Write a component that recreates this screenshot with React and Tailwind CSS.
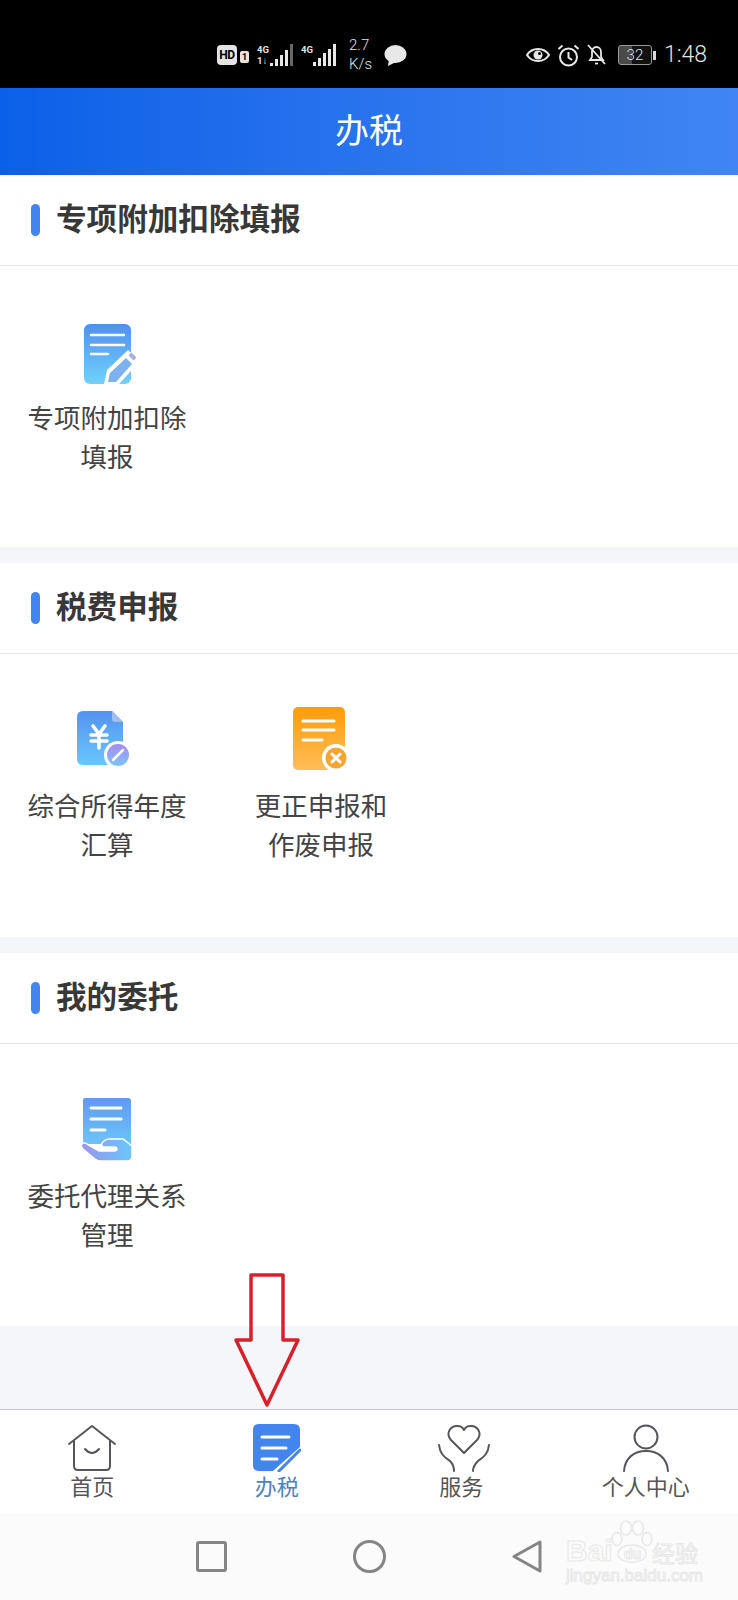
import React from 'react';

function SignalBars({ heights, dimLast }) {
    return (
        <div className="flex items-end gap-[2px] h-[22px]">
            {heights.map((h, i) => (
                <div key={i} className={`w-[3px] ${dimLast && i === heights.length - 1 ? 'bg-[#666]' : 'bg-[#e8e8e8]'}`} style={{ height: h }}></div>
            ))}
        </div>
    );
}

function StatusBar() {
    return (
        <div className="h-[88px] bg-black flex items-center justify-between pt-[22px] pl-[217px] pr-[31px] text-[#e2e2e2] font-['Roboto',sans-serif]">
            <div className="flex items-center">
                <div className="w-[20px] h-[20px] rounded-[4px] bg-[#e4e4e4] text-black text-[12px] font-bold leading-[20px] text-center tracking-[-0.5px]">HD</div>
                <div className="ml-[3px] mt-[4px] w-[9px] h-[12px] rounded-[2px] bg-[#e4e4e4] text-black text-[9px] font-bold leading-[12px] text-center">1</div>
                <div className="ml-[8px] w-[13px] text-[9.5px] font-bold leading-[11px]">
                    <div>4G</div>
                    <div>1↓</div>
                </div>
                <div className="ml-[0px]"><SignalBars heights={[3, 7, 11, 16, 22]} dimLast /></div>
                <div className="ml-[8px] w-[12px] h-[22px] text-[9.5px] font-bold leading-[11px]">4G</div>
                <div className="ml-[0px]"><SignalBars heights={[4, 8, 13, 17, 22]} /></div>
                <div className="ml-[13px] w-[24px] text-[15px] leading-[19px] font-light">
                    <div>2.7</div>
                    <div>K/s</div>
                </div>
                <svg className="ml-[11px]" width="23" height="21" viewBox="0 0 23 21">
                    <ellipse cx="11.5" cy="9" rx="11" ry="9" fill="#e8e8e8" />
                    <path d="M5 14 L4 21 L12 17 Z" fill="#e8e8e8" />
                </svg>
            </div>
            <div className="flex items-center">
                <svg width="24" height="18" viewBox="0 0 24 18" fill="none" stroke="#e8e8e8" strokeWidth="2">
                    <path d="M1 9 C6 1 18 1 23 9 C18 17 6 17 1 9 Z" />
                    <circle cx="12" cy="9" r="4.5" fill="#e8e8e8" stroke="none" />
                    <circle cx="13.5" cy="7.5" r="1.5" fill="#000" stroke="none" />
                </svg>
                <svg className="ml-[7px]" width="23" height="23" viewBox="0 0 23 23" fill="none" stroke="#e8e8e8" strokeWidth="2">
                    <circle cx="11.5" cy="13" r="8.5" />
                    <path d="M11.5 8 V13.5 L15 16" />
                    <path d="M1.5 5 L5.5 1.5 M21.5 5 L17.5 1.5" />
                </svg>
                <svg className="ml-[7px]" width="19" height="22" viewBox="0 0 19 22" fill="none" stroke="#e8e8e8" strokeWidth="1.8">
                    <path d="M3 16 H16 L14 13 V8 C14 5 12 3 9.5 3 C7 3 5 5 5 8 V13 Z" />
                    <path d="M8 19.5 H11" />
                    <path d="M1 1 L18 20" />
                </svg>
                <div className="ml-[12px] w-[34px] h-[20px] rounded-[3px] border border-[#9a9a9a] bg-[linear-gradient(90deg,#4a4a4a_40%,#111_40%)] text-[15px] leading-[18px] text-center font-light">32</div>
                <div className="ml-[1px] w-[3px] h-[9px] bg-[#d8d8d8]"></div>
                <div className="ml-[8px] text-[23px] leading-[30px] font-light">1:48</div>
            </div>
        </div>
    );
}

function DocPencil() {
    return (
        <svg width="47" height="60" viewBox="0 0 47 60" className="overflow-visible">
            <defs>
                <linearGradient id="docBlue" x1="0" y1="0" x2="0" y2="1">
                    <stop offset="0" stopColor="#5190ee" />
                    <stop offset="1" stopColor="#6fd2fb" />
                </linearGradient>
            </defs>
            <rect x="0" y="0" width="47" height="60" rx="6" fill="url(#docBlue)" />
            <path d="M7 11 H40 M7 21 H40 M7 30 H24" stroke="#fff" strokeWidth="2.5" strokeLinecap="round" />
            <path d="M20 60 L23 46 L44 26 L56 37 L35 60 Z" fill="#fff" />
            <path d="M24 58 L26 49 L42 34 L48 40 L32 58 Z" fill="#7fb1ee" />
            <path d="M46 30 L51 35" stroke="#a9addf" strokeWidth="4" />
        </svg>
    );
}

function DocYuan() {
    return (
        <svg className="mb-[3px]" width="60" height="58" viewBox="0 0 60 58">
            <defs>
                <linearGradient id="yuanBlue" x1="0" y1="0" x2="0" y2="1">
                    <stop offset="0" stopColor="#5493f0" />
                    <stop offset="1" stopColor="#67c8fa" />
                </linearGradient>
                <linearGradient id="yuanPurple" x1="0" y1="0" x2="0" y2="1">
                    <stop offset="0" stopColor="#a78bf0" />
                    <stop offset="1" stopColor="#7cc4f8" />
                </linearGradient>
            </defs>
            <path d="M6 0 H35 L46 11 V48 Q46 54 40 54 H6 Q0 54 0 48 V6 Q0 0 6 0 Z" fill="url(#yuanBlue)" />
            <path d="M35 0 L46 11 H38 Q35 11 35 8 Z" fill="#9dbdf3" />
            <path d="M16 15 L22 23 L28 15 M14 24 H30 M14 30 H30 M22 23 V37" fill="none" stroke="#fff" strokeWidth="3.6" strokeLinecap="round" />
            <circle cx="41" cy="44" r="14" fill="#fff" />
            <circle cx="41" cy="44" r="11" fill="url(#yuanPurple)" />
            <path d="M36 49 L46 39" stroke="#fff" strokeWidth="2.5" strokeLinecap="round" />
        </svg>
    );
}

function DocCancel() {
    return (
        <svg width="57" height="65" viewBox="0 0 57 65">
            <defs>
                <linearGradient id="docOrange" x1="0" y1="0" x2="0" y2="1">
                    <stop offset="0" stopColor="#ff9c0a" />
                    <stop offset="1" stopColor="#ffbc58" />
                </linearGradient>
            </defs>
            <rect x="0" y="0" width="52" height="63" rx="5" fill="url(#docOrange)" />
            <path d="M10 14 H41 M10 23 H41 M10 33 H29" stroke="#fff" strokeWidth="3" strokeLinecap="round" />
            <circle cx="43" cy="51" r="14" fill="#fff" />
            <circle cx="43" cy="51" r="10.5" fill="#f5a632" />
            <path d="M39 47 L47 55 M47 47 L39 55" stroke="#fff" strokeWidth="3" strokeLinecap="round" />
        </svg>
    );
}

function DocHand() {
    return (
        <svg width="52" height="64" viewBox="0 0 52 64">
            <defs>
                <linearGradient id="handDoc" x1="0" y1="0" x2="0" y2="1">
                    <stop offset="0" stopColor="#5f9af0" />
                    <stop offset="1" stopColor="#6cc4f8" />
                </linearGradient>
                <linearGradient id="handFill" x1="0" y1="0" x2="1" y2="0">
                    <stop offset="0" stopColor="#9a95ee" />
                    <stop offset="1" stopColor="#68c6fb" />
                </linearGradient>
            </defs>
            <path d="M4 0 H47 Q50 0 50 3 V46 H4 Q2 46 2 44 V2 Q2 0 4 0 Z" fill="url(#handDoc)" />
            <path d="M10 10 H40 M10 21 H40 M10 32 H24" stroke="#fff" strokeWidth="3" strokeLinecap="round" />
            <path d="M1 46 Q3 44 6 46 L18 53 H33 Q36 53 36 51 Q36 49 33 49 H22 Q19 46 23 43 Q25 41 29 41 H42 L51 48 V58 Q51 63 46 63 H20 Q17 63 14 61 L2 51 Q-1 48 1 46 Z" fill="url(#handFill)" stroke="#fff" strokeWidth="1.5" />
        </svg>
    );
}

function Section({ title, items, contentClass }) {
    return (
        <section className="bg-white">
            <div className="h-[91px] flex items-center border-b border-[#e4e4e6] pl-[31px]">
                <div className="w-[9px] h-[32px] rounded-full bg-[#4285f0]"></div>
                <h2 className="ml-[16px] -mt-[6px] text-[30.6px] leading-[40px] font-bold text-[#383838]">{title}</h2>
            </div>
            <div className={`grid grid-cols-[214px_214px_214px] pt-[50px] ${contentClass}`}>
                {items.map((item) => (
                    <div key={item.key} className="flex flex-col items-center">
                        <div className="h-[68px] flex items-end">{item.icon}</div>
                        <p className={`mt-[13px] text-[26.5px] leading-[39px] text-[#444] text-center ${item.widthClass}`}>{item.label}</p>
                    </div>
                ))}
            </div>
        </section>
    );
}

function HomeIcon() {
    return (
        <svg width="48" height="48" viewBox="0 0 48 48" fill="none" stroke="#55565c" strokeWidth="2" strokeLinecap="round" strokeLinejoin="round">
            <path d="M1 20 L24 2 L47 20" />
            <path d="M6 17 V42 Q6 46 10 46 H38 Q42 46 42 42 V17" />
            <path d="M17 25 Q24 33 31 25" />
        </svg>
    );
}

function TaxIcon() {
    return (
        <svg width="48" height="48" viewBox="0 0 48 48">
            <path d="M6 0 H41 Q47 0 47 6 V23 L20 47 H6 Q0 47 0 41 V6 Q0 0 6 0 Z" fill="#4285ef" />
            <path d="M9 13 H36 M9 24 H33 M9 35 H24" stroke="#fff" strokeWidth="3" strokeLinecap="round" />
            <path d="M26 47 L47 26" stroke="#4285ef" strokeWidth="3" strokeLinecap="round" />
        </svg>
    );
}

function ServiceIcon() {
    return (
        <svg className="ml-[5px]" width="54" height="48" viewBox="0 0 54 48" fill="none" stroke="#55565c" strokeWidth="2" strokeLinecap="round" strokeLinejoin="round">
            <path d="M27 29 L14 16 C8 9 14 1 21 2 C24 2 26 4 27 6 C28 4 30 2 33 2 C40 1 46 9 40 16 Z" />
            <path d="M2 21 C3 31 9 34 13 37 C16 40 17 43 17 47" />
            <path d="M52 21 C51 31 45 34 41 37 C38 40 36 43 36 47" />
        </svg>
    );
}

function PersonIcon() {
    return (
        <svg width="46" height="48" viewBox="0 0 46 48" fill="none" stroke="#55565c" strokeWidth="2" strokeLinecap="round">
            <circle cx="23" cy="13" r="11.5" />
            <path d="M1 47 C2 34 11 27 23 27 C35 27 44 34 45 47" />
        </svg>
    );
}

function Tab({ label, icon, active }) {
    return (
        <div className="flex-1 flex flex-col items-center pt-[14px]">
            <div className="h-[48px] flex items-end">{icon}</div>
            <span className={`-mt-[3px] text-[22px] leading-[32px] ${active ? 'text-[#4b83c8]' : 'text-[#555]'}`}>{label}</span>
        </div>
    );
}

function Watermark() {
    return (
        <div className="absolute left-[566px] top-[1520px] w-[134px] h-[64px] text-[#fbfbfb] [-webkit-text-stroke:1px_#e8e8e8] font-['Liberation_Sans',sans-serif]">
            <svg className="absolute left-[45px] top-0" width="42" height="46" viewBox="0 0 42 46" fill="none" stroke="#e8e8e8" strokeWidth="1.5">
                <ellipse cx="6" cy="19" rx="5" ry="6.5" />
                <ellipse cx="15" cy="8" rx="5.5" ry="7" />
                <ellipse cx="27" cy="8" rx="5.5" ry="7" />
                <ellipse cx="36" cy="19" rx="5" ry="6.5" />
                <path d="M7 34 C7 22 35 22 35 34 C35 45 7 45 7 34 Z" />
            </svg>
            <span className="absolute left-0 top-[15px] text-[30px] leading-[32px] font-bold">Bai</span>
            <span className="absolute left-[58px] top-[26px] text-[14px] leading-[16px] font-bold">du</span>
            <span className="absolute left-[86px] top-[18px] text-[23px] leading-[28px] font-['Noto_Sans_CJK_SC',sans-serif]">经验</span>
            <span className="absolute left-0 top-[47px] text-[17px] leading-[18px]">jingyan.baidu.com</span>
        </div>
    );
}

export default function App() {
    const deduction = [
        { key: 'a', icon: <DocPencil />, label: '专项附加扣除填报', widthClass: 'w-[160px]' },
    ];
    const filing = [
        { key: 'b', icon: <DocYuan />, label: '综合所得年度汇算', widthClass: 'w-[160px]' },
        { key: 'c', icon: <DocCancel />, label: '更正申报和作废申报', widthClass: 'w-[136px]' },
    ];
    const entrust = [
        { key: 'd', icon: <DocHand />, label: '委托代理关系管理', widthClass: 'w-[160px]' },
    ];

    return (
        <div className="relative w-[738px] h-[1600px] overflow-hidden flex flex-col bg-[#f5f6fa] font-['Noto_Sans_CJK_SC',sans-serif]">
            <StatusBar />
            <header className="h-[87px] flex items-center justify-center bg-gradient-to-r from-[#0a60e8] to-[#4085f3]">
                <h1 className="-mt-[6px] text-[34px] leading-[44px] text-white">办税</h1>
            </header>

            <Section title="专项附加扣除填报" items={deduction} contentClass="h-[281px]" />
            <div className="h-[16px]"></div>
            <Section title="税费申报" items={filing} contentClass="h-[283px]" />
            <div className="h-[16px]"></div>
            <Section title="我的委托" items={entrust} contentClass="h-[282px]" />

            <div className="flex-1"></div>

            <nav className="h-[104px] bg-white border-t border-[#c9c9cd] flex">
                <Tab label="首页" icon={<HomeIcon />} />
                <Tab label="办税" icon={<TaxIcon />} active />
                <Tab label="服务" icon={<ServiceIcon />} />
                <Tab label="个人中心" icon={<PersonIcon />} />
            </nav>

            <div className="h-[87px] bg-[#fbfbfb] flex items-center pl-[196px] gap-[126px]">
                <div className="w-[31px] h-[31px] rounded-[3px] border-[3px] border-[#858585]"></div>
                <div className="w-[33px] h-[33px] rounded-full border-[3px] border-[#858585]"></div>
                <svg width="30" height="33" viewBox="0 0 30 33" fill="none" stroke="#858585" strokeWidth="3" strokeLinejoin="round">
                    <path d="M28 2 V31 L2 16.5 Z" />
                </svg>
            </div>

            {/* red arrow drawn on top of the screenshot */}
            <svg className="absolute left-[233px] top-[1272px]" width="68" height="138" viewBox="0 0 68 138" fill="none" stroke="#d8202b" strokeWidth="3.5" strokeLinejoin="round">
                <path d="M18 3 H50 V68 H65 L34 133 L3 68 H18 Z" />
            </svg>

            <Watermark />
        </div>
    );
}
